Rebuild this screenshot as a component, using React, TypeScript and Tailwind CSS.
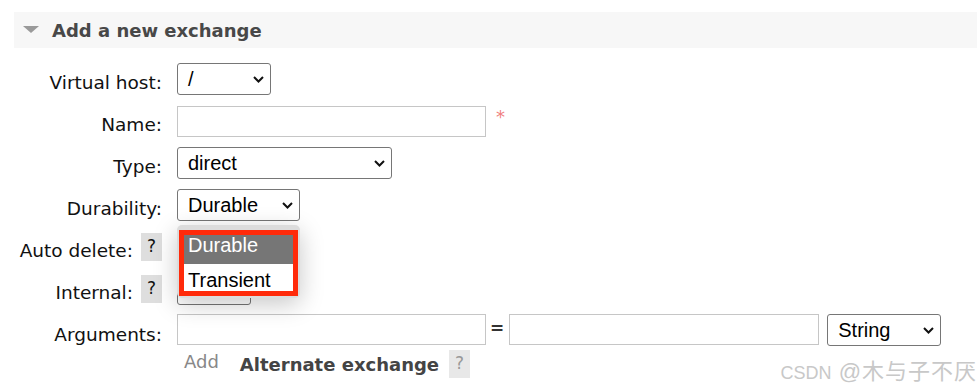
const label = "font-['DejaVu_Sans',Verdana,sans-serif] text-[18.5px] text-[#111]";
const ctl = "font-['Liberation_Sans',Arial,sans-serif] text-[20px] text-black";

function Chevron() {
  return (
    <svg width="11" height="7" viewBox="0 0 11 7" className="shrink-0">
      <path d="M1 1 L5.5 5.5 L10 1" fill="none" stroke="#111" strokeWidth="2" />
    </svg>
  );
}

function Select({ value, width }: { value: string; width: string }) {
  return (
    <div className={`${width} h-[32px] flex items-center justify-between pl-[10px] pr-[6px] border border-[#767676] rounded-[3px] bg-white ${ctl}`}>
      <span className="leading-none">{value}</span>
      <Chevron />
    </div>
  );
}

function Help({ faded }: { faded?: boolean }) {
  return (
    <span
      className={`inline-flex w-[21px] h-[28px] items-center justify-center font-['DejaVu_Sans',Verdana,sans-serif] text-[17px] ${
        faded ? 'bg-[#e8e8e8] text-[#999]' : 'bg-[#dedede] text-[#111]'
      }`}
    >
      ?
    </span>
  );
}

function Row({ name, help, children }: { name: string; help?: boolean; children?: React.ReactNode }) {
  return (
    <div className="flex items-center h-[42px]">
      <div className="w-[163px] flex items-center justify-end gap-[8px] pr-[1px]">
        <span className={`${label} pt-[8px]`}>{name}</span>
        {help && <Help />}
      </div>
      <div className="pl-[14px] flex items-center">{children}</div>
    </div>
  );
}

export default function App() {
  return (
    <div className="w-[977px] h-[390px] bg-white overflow-hidden relative">
      <div className="ml-[14px] mt-[12px] h-[36px] bg-[#f7f7f7] flex items-center">
        <svg width="16" height="8" viewBox="0 0 16 8" className="ml-[9px]">
          <path d="M0 0 L16 0 L8 7 Z" fill="#9a9a9a" />
        </svg>
        <span className="ml-[13px] font-['DejaVu_Sans',Verdana,sans-serif] font-bold text-[18px] text-[#484848]">
          Add a new exchange
        </span>
      </div>

      <div className="mt-[10px]">
        <Row name="Virtual host:">
          <Select value="/" width="w-[94px]" />
        </Row>
        <Row name="Name:">
          <div className="w-[309px] h-[31px] border border-[#c6c6c6]" />
          <span className="ml-[10px] -mt-[10px] text-[#f08080] text-[18px] font-['DejaVu_Sans',sans-serif]">*</span>
        </Row>
        <Row name="Type:">
          <Select value="direct" width="w-[215px]" />
        </Row>
        <Row name="Durability:">
          <Select value="Durable" width="w-[123px]" />
        </Row>
        <Row name="Auto delete:" help>
          <Select value="" width="w-[74px]" />
        </Row>
        <Row name="Internal:" help>
          <Select value="" width="w-[74px]" />
        </Row>
        <Row name="Arguments:">
          <div className="w-[309px] h-[31px] border border-[#c6c6c6] -mt-[4px]" />
          <span className="ml-[4px] mr-[5px] font-['DejaVu_Sans',sans-serif] text-[17px] font-bold text-[#333] -mt-[4px]">=</span>
          <div className="w-[310px] h-[31px] border border-[#c6c6c6] -mt-[4px]" />
          <div className="ml-[8px] -mt-[2px]">
            <Select value="String" width="w-[114px]" />
          </div>
        </Row>
        <div className="flex items-center ml-[184px] -mt-[3px]">
          <span className="font-['DejaVu_Sans',Verdana,sans-serif] text-[18px] text-[#888] -mt-[4px]">Add</span>
          <span className="ml-[21px] pt-[2px] font-['DejaVu_Sans',Verdana,sans-serif] font-bold text-[18px] text-[#444]">
            Alternate exchange
          </span>
          <span className="ml-[10px]">
            <Help faded />
          </span>
        </div>
      </div>

      {/* open dropdown for Durability, with red annotation frame */}
      <div className="absolute left-[177px] top-[225px] w-[123px] h-[73px] rounded-[5px] bg-[#dcdcdc] shadow-[0_6px_24px_rgba(0,0,0,0.22)] pt-[5px] px-[2px]">
        <div className={`border-[5px] border-[#ff2a0a] bg-white leading-none ${ctl}`}>
          <div className="h-[29px] bg-[#767676] text-white pl-[4px]">Durable</div>
          <div className="h-[27px] bg-white pl-[4px] pt-[6px]">Transient</div>
        </div>
      </div>

      <div className="absolute right-0 bottom-[2px] text-[#c8c8c8] whitespace-nowrap">
        <span className="font-['Liberation_Sans',sans-serif] text-[18px]">CSDN</span>
        <span className="font-['Liberation_Sans','Noto_Sans_CJK_SC',sans-serif] text-[22px] tracking-[1px]"> @木与子不厌</span>
      </div>
    </div>
  );
}
